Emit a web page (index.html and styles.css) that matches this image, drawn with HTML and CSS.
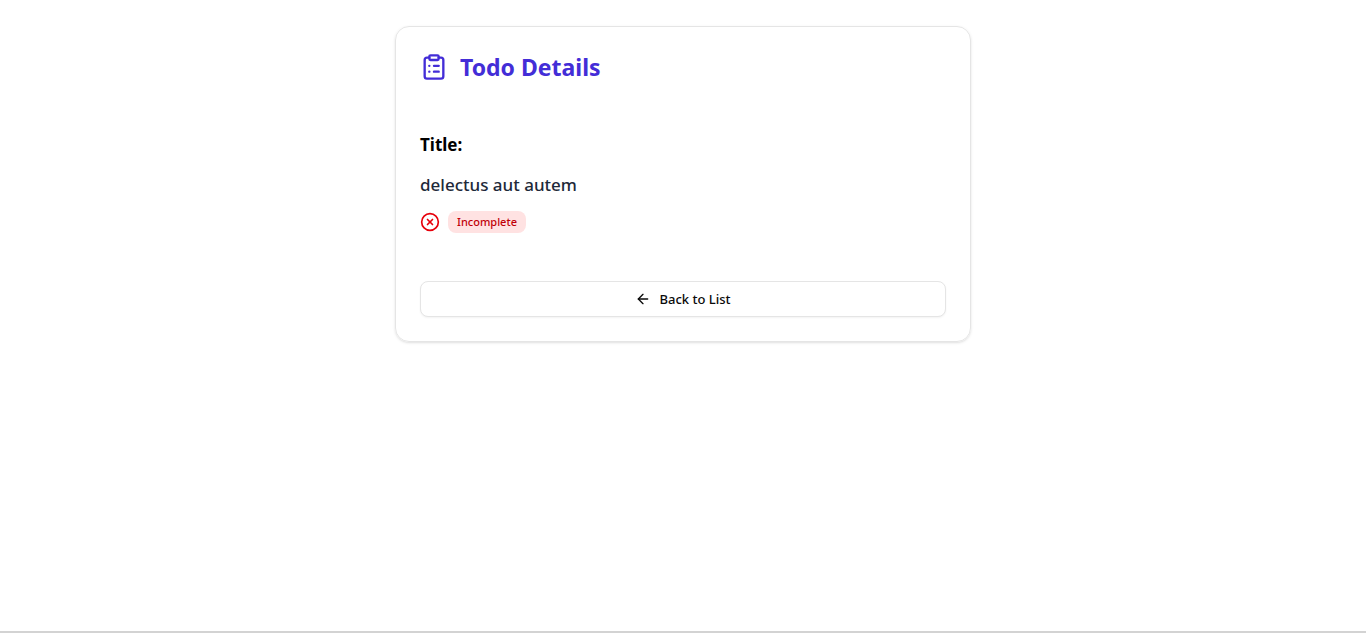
FILE: index.html
```html
<!DOCTYPE html>
<html lang="en">
<head>
<meta charset="utf-8">
<meta name="viewport" content="width=device-width, initial-scale=1">
<title>Todo Details</title>
<link rel="stylesheet" href="styles.css">
</head>
<body>
<main class="page">
  <article class="card">
    <header class="card-header">
      <svg class="icon-clipboard" viewBox="0 0 24 24" aria-hidden="true"><rect width="8" height="4" x="8" y="2" rx="1" ry="1"/><path d="M16 4h2a2 2 0 0 1 2 2v14a2 2 0 0 1-2 2H6a2 2 0 0 1-2-2V6a2 2 0 0 1 2-2h2"/><path d="M12 11h4"/><path d="M12 16h4"/><path d="M8 11h.01"/><path d="M8 16h.01"/></svg>
      <h1 class="card-title">Todo Details</h1>
    </header>
    <section class="card-content">
      <h2 class="label">Title:</h2>
      <p class="todo-title">delectus aut autem</p>
      <div class="status">
        <svg class="icon-status" viewBox="0 0 24 24" aria-hidden="true"><circle cx="12" cy="12" r="10"/><path d="m15 9-6 6"/><path d="m9 9 6 6"/></svg>
        <span class="badge">Incomplete</span>
      </div>
    </section>
    <button class="back-button" type="button">
      <svg class="icon-arrow" viewBox="0 0 24 24" aria-hidden="true"><path d="m12 19-7-7 7-7"/><path d="M19 12H5"/></svg>
      Back to List
    </button>
  </article>
</main>
<footer class="bottom-edge"></footer>
</body>
</html>
```
FILE: styles.css
```css
* {
  box-sizing: border-box;
  margin: 0;
}

body {
  display: flex;
  flex-direction: column;
  min-height: 100vh;
  background: #fff;
  color: #0a0a0a;
  font-family: "Segoe UI", "Noto Sans", sans-serif;
}

svg {
  flex: none;
  fill: none;
  stroke: currentColor;
  stroke-width: 2;
  stroke-linecap: round;
  stroke-linejoin: round;
}

.page {
  flex: 1;
  padding: 26px 16px;
}

.card {
  max-width: 576px;
  margin: 0 auto;
  padding: 24px;
  border: 1px solid #e5e5e5;
  border-radius: 14px;
  box-shadow: 0 1px 3px rgba(0, 0, 0, 0.1), 0 1px 2px -1px rgba(0, 0, 0, 0.1);
}

.card-header {
  display: flex;
  align-items: center;
  gap: 12px;
  color: #432dd7;
}

.icon-clipboard {
  width: 28px;
  height: 28px;
}

.card-title {
  font-size: 23px;
  font-weight: 700;
  line-height: 32px;
}

.card-content {
  padding: 48px 0;
}

.label {
  color: #000;
  font-size: 17px;
  font-weight: 700;
  line-height: 28px;
}

.todo-title {
  margin-top: 12px;
  color: #1e2939;
  font-size: 17px;
  font-weight: 500;
  line-height: 28px;
}

.status {
  display: flex;
  align-items: center;
  gap: 8px;
  margin-top: 12px;
}

.icon-status {
  width: 20px;
  height: 20px;
  color: #e7000b;
}

.badge {
  padding: 3px 9px;
  border-radius: 8px;
  background: #ffe2e2;
  color: #c10007;
  font-size: 11px;
  font-weight: 500;
  line-height: 16px;
}

.back-button {
  display: flex;
  align-items: center;
  justify-content: center;
  gap: 8px;
  width: 100%;
  height: 36px;
  border: 1px solid #e5e5e5;
  border-radius: 8px;
  background: #fff;
  box-shadow: 0 1px 2px rgba(0, 0, 0, 0.05);
  color: #0a0a0a;
  font-family: inherit;
  font-size: 13px;
  font-weight: 500;
  line-height: 20px;
}

.icon-arrow {
  width: 16px;
  height: 16px;
}

.bottom-edge {
  height: 2px;
  background: #d3d3d3;
}
```
